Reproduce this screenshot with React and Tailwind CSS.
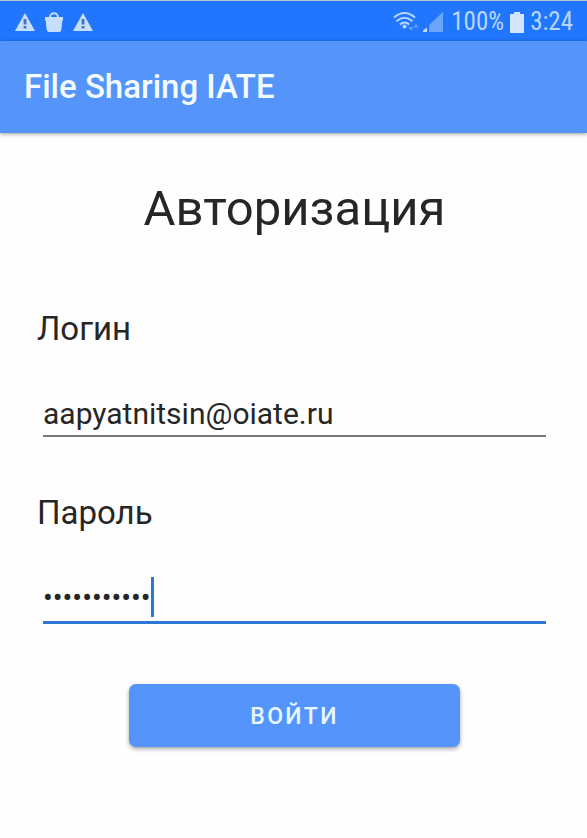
function AlertIcon() {
  return (
    <svg viewBox="0 0 20 18" className="h-[18px] w-5" fill="none" aria-hidden="true">
      <path d="M10 0 20 18H0Z" fill="#c7defc" />
      <path d="M8.6 6h2.8v5.5H8.6zM8.6 13h2.8v2.4H8.6z" fill="#3f74c4" />
    </svg>
  );
}

function BagIcon() {
  return (
    <svg viewBox="0 0 18 20" className="h-5 w-[18px]" fill="none" aria-hidden="true">
      <path d="M5.2 6V4.5a3.8 3.3 0 0 1 7.6 0V6" stroke="#c7defc" strokeWidth="2" />
      <path d="M0 5h18v3.5h-.7L16.3 18q-.3 2-2.300 2H4q-2 0-2.300-2L.7 8.500H0Z" fill="#c7defc" />
    </svg>
  );
}

function WifiIcon() {
  return (
    <svg viewBox="0 0 26 20" className="h-5 w-[26px]" fill="none" aria-hidden="true">
      <g stroke="#b9d6fb" strokeWidth="2">
        <path d="M1 5.500q10.500-9 21 0" />
        <path d="M3.500 9.200q8-6.800 16 0" />
        <path d="M6.800 12.600q4.700-4.200 9.400 0" />
      </g>
      <circle cx="11.500" cy="14.600" r="2" fill="#b9d6fb" />
      <path d="M15.500 15h5L18 19zM20.500 15.500h5L23 11.500z" fill="#5f9ffb" />
    </svg>
  );
}

function SignalIcon() {
  return (
    <svg viewBox="0 0 20 20" className="h-5 w-5" fill="none" aria-hidden="true">
      <path d="M20 0v20H6V13Z" fill="#6ba5fc" />
      <path d="M4 15.500V20H0v-1.500Z" fill="#c7defc" />
    </svg>
  );
}

function BatteryIcon() {
  return (
    <svg viewBox="0 0 14 21" className="h-[21px] w-[14px]" aria-hidden="true">
      <path d="M4 0h6v2h4v19H0V2h4Z" fill="#d5e5fd" />
    </svg>
  );
}

function StatusBar() {
  return (
    <div className="flex h-[41px] items-center justify-between border-t border-[#b5c3d6] bg-[#2176ff] pl-[15px] pr-[14px] pt-0.5">
      <div className="flex items-center gap-[10px]">
        <AlertIcon />
        <BagIcon />
        <AlertIcon />
      </div>
      <div className="flex items-center font-['Roboto_Condensed',Roboto,sans-serif] text-[25px] leading-[28px] text-[#b9d6fb]">
        <WifiIcon />
        <span className="ml-1">
          <SignalIcon />
        </span>
        <span className="ml-2">100%</span>
        <span className="ml-[6px]">
          <BatteryIcon />
        </span>
        <span className="ml-[6px]">3:24</span>
      </div>
    </div>
  );
}

export default function App() {
  return (
    <div className="min-h-screen bg-[#fefefe] font-[Roboto,sans-serif] text-[#262626]">
      <StatusBar />
      <header className="flex h-[92px] items-center bg-[#5595fb] px-6 shadow-[0_1px_4px_rgba(0,0,0,0.4)]">
        <span className="text-[33px] font-medium leading-10 text-[#f3fbff]">File Sharing IATE</span>
      </header>
      <main className="pl-[37px] pr-[35px] pt-12">
        <h1 className="text-center text-[49px] leading-[56px]">Авторизация</h1>
        <form className="mt-[72px]" onSubmit={(e) => e.preventDefault()}>
          <label htmlFor="login" className="block text-[33px] leading-10">
            Логин
          </label>
          <div className="mx-[6px] mt-[42px]">
            <input
              id="login"
              type="text"
              defaultValue="aapyatnitsin@oiate.ru"
              className="block h-[46px] w-full border-b-2 border-[#777577] bg-transparent text-[30px] outline-none"
            />
          </div>
          <label htmlFor="password" className="mt-14 block text-[33px] leading-10">
            Пароль
          </label>
          <div className="relative mx-[6px] mt-10">
            <input
              id="password"
              type="password"
              defaultValue="abcdefghijk"
              className="block h-[51px] w-full border-b-[3px] border-[#2b77d3] bg-transparent pt-0.5 text-[29px] outline-none"
            />
            <span className="absolute left-[108px] top-1 h-10 w-[3px] bg-[#2b77d3]" />
          </div>
          <button
            type="submit"
            className="mx-auto mt-[60px] block h-[63px] w-[331px] rounded-[7px] bg-[#5595fb] pt-1 text-[23px] font-medium tracking-widest text-[#e9f8ff] shadow-[0_2px_4px_rgba(0,0,0,0.35)]"
          >
            ВОЙТИ
          </button>
        </form>
      </main>
    </div>
  );
}
